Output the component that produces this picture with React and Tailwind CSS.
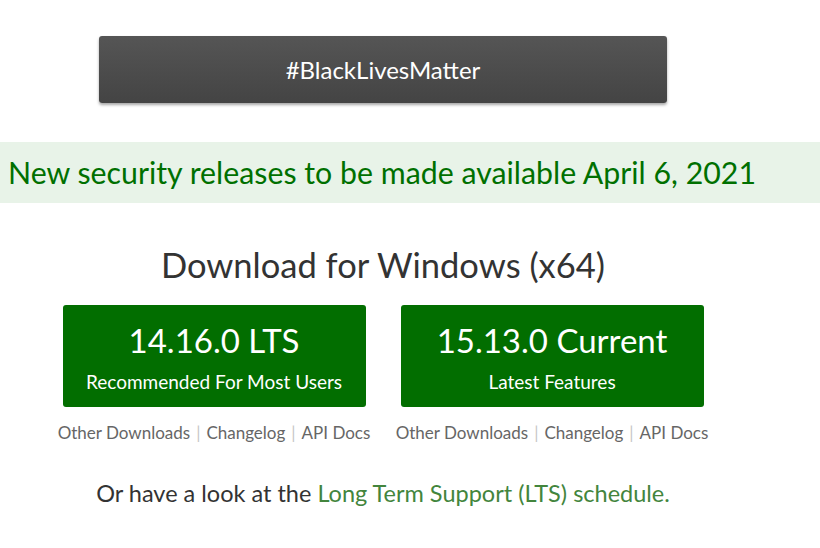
import React from 'react';

const font = { fontFamily: 'Lato, "Open Sans", sans-serif' };

function DownloadButton({ version, label }) {
    return (
        <div className="flex w-[338px] flex-col items-center">
            <a className="flex h-[102px] w-[303px] flex-col items-center justify-center rounded-[3px] bg-[#026e00] text-white">
                <span className="mt-[2px] text-[33px] leading-[40px]">{version}</span>
                <span className="mt-[10px] text-[19px] leading-[24px]">{label}</span>
            </a>
            <div className="mt-[13px] flex items-center text-[17px] text-[#666]">
                <span>Other Downloads</span>
                <span className="mx-[6px] text-[#c7c7c7]">|</span>
                <span>Changelog</span>
                <span className="mx-[6px] text-[#c7c7c7]">|</span>
                <span>API Docs</span>
            </div>
        </div>
    );
}

export default function App() {
    return (
        <div className="min-h-screen w-[820px] bg-white" style={font}>
            <div className="flex w-[766px] justify-center pt-[36px]">
                <div className="flex h-[67px] w-[568px] items-center justify-center rounded-[3px] bg-gradient-to-b from-[#555] to-[#444] text-[24px] text-white shadow-[0_2px_3px_rgba(0,0,0,0.35)]">
                    #BlackLivesMatter
                </div>
            </div>

            <div className="mt-[39px] flex h-[61px] items-center bg-[#e8f3e8] pl-[8px] text-[30.3px] text-[#007000]">
                New security releases to be made available April 6, 2021
            </div>

            <div className="flex w-[766px] flex-col items-center">
                <h1 className="mt-[40px] text-[34.5px] leading-[44px] text-[#333]">Download for Windows (x64)</h1>
                <div className="mt-[18px] flex">
                    <DownloadButton version="14.16.0 LTS" label="Recommended For Most Users" />
                    <DownloadButton version="15.13.0 Current" label="Latest Features" />
                </div>
                <p className="mt-[30px] text-[23.5px] text-[#333]">
                    Or have a look at the <a className="text-[#43853d]">Long Term Support (LTS) schedule.</a>
                </p>
            </div>
        </div>
    );
}
